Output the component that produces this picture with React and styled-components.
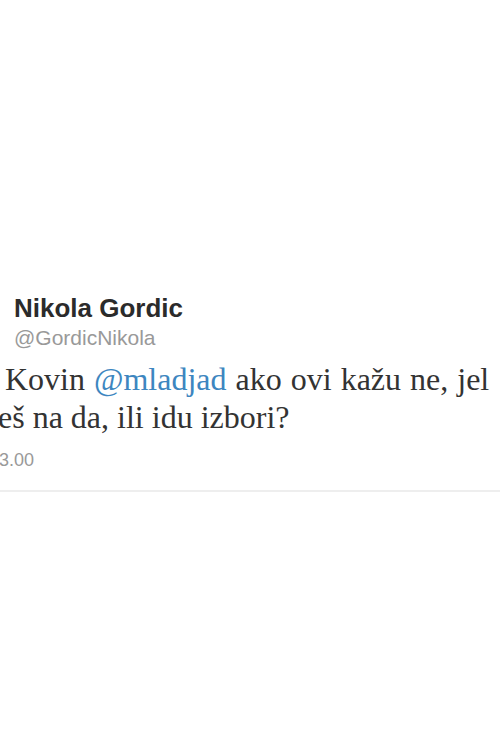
import React from "react";
import styled, { createGlobalStyle } from "styled-components";

const GlobalStyle = createGlobalStyle`
  html, body {
    margin: 0;
    padding: 0;
    background: #ffffff;
    overflow: hidden;
  }
`;

const Page = styled.div`
  width: 500px;
  height: 750px;
  overflow: hidden;
  background: #ffffff;
  padding-top: 293px;
  box-sizing: border-box;
`;

const Header = styled.div`
  display: flex;
  flex-direction: column;
  gap: 3px;
  margin-left: 14px;
`;

const Name = styled.div`
  font-family: "Liberation Sans", Arial, sans-serif;
  font-weight: 700;
  font-size: 26px;
  line-height: 30px;
  color: #2b2b2b;
  white-space: nowrap;
`;

const Handle = styled.div`
  font-family: "Liberation Sans", Arial, sans-serif;
  font-size: 21px;
  line-height: 24px;
  color: #999999;
  white-space: nowrap;
`;

const Text = styled.div`
  margin-top: 10px;
  font-family: "Liberation Serif", Georgia, serif;
  font-size: 32px;
  line-height: 38px;
  color: #333333;
`;

const Line = styled.div`
  white-space: nowrap;
  margin-left: ${(p) => p.$offset}px;
  word-spacing: ${(p) => p.$wordSpacing || 0}px;
`;

const Mention = styled.span`
  color: #3d86c0;
`;

const Time = styled.div`
  margin-top: 13px;
  margin-left: -1px;
  font-family: "Liberation Sans", Arial, sans-serif;
  font-size: 18px;
  line-height: 22px;
  color: #999999;
`;

const Divider = styled.div`
  margin-top: 19px;
  height: 2px;
  background: #eeeeee;
`;

export default function App() {
  return (
    <>
      <GlobalStyle />
      <Page>
        <Header>
          <Name>Nikola Gordic</Name>
          <Handle>@GordicNikola</Handle>
        </Header>
        <Text>
          <Line $offset={5} $wordSpacing={1}>
            Kovin <Mention>@mladjad</Mention> ako ovi kažu ne, jel
          </Line>
          <Line $offset={-2}>eš na da, ili idu izbori?</Line>
        </Text>
        <Time>3.00</Time>
        <Divider />
      </Page>
    </>
  );
}
